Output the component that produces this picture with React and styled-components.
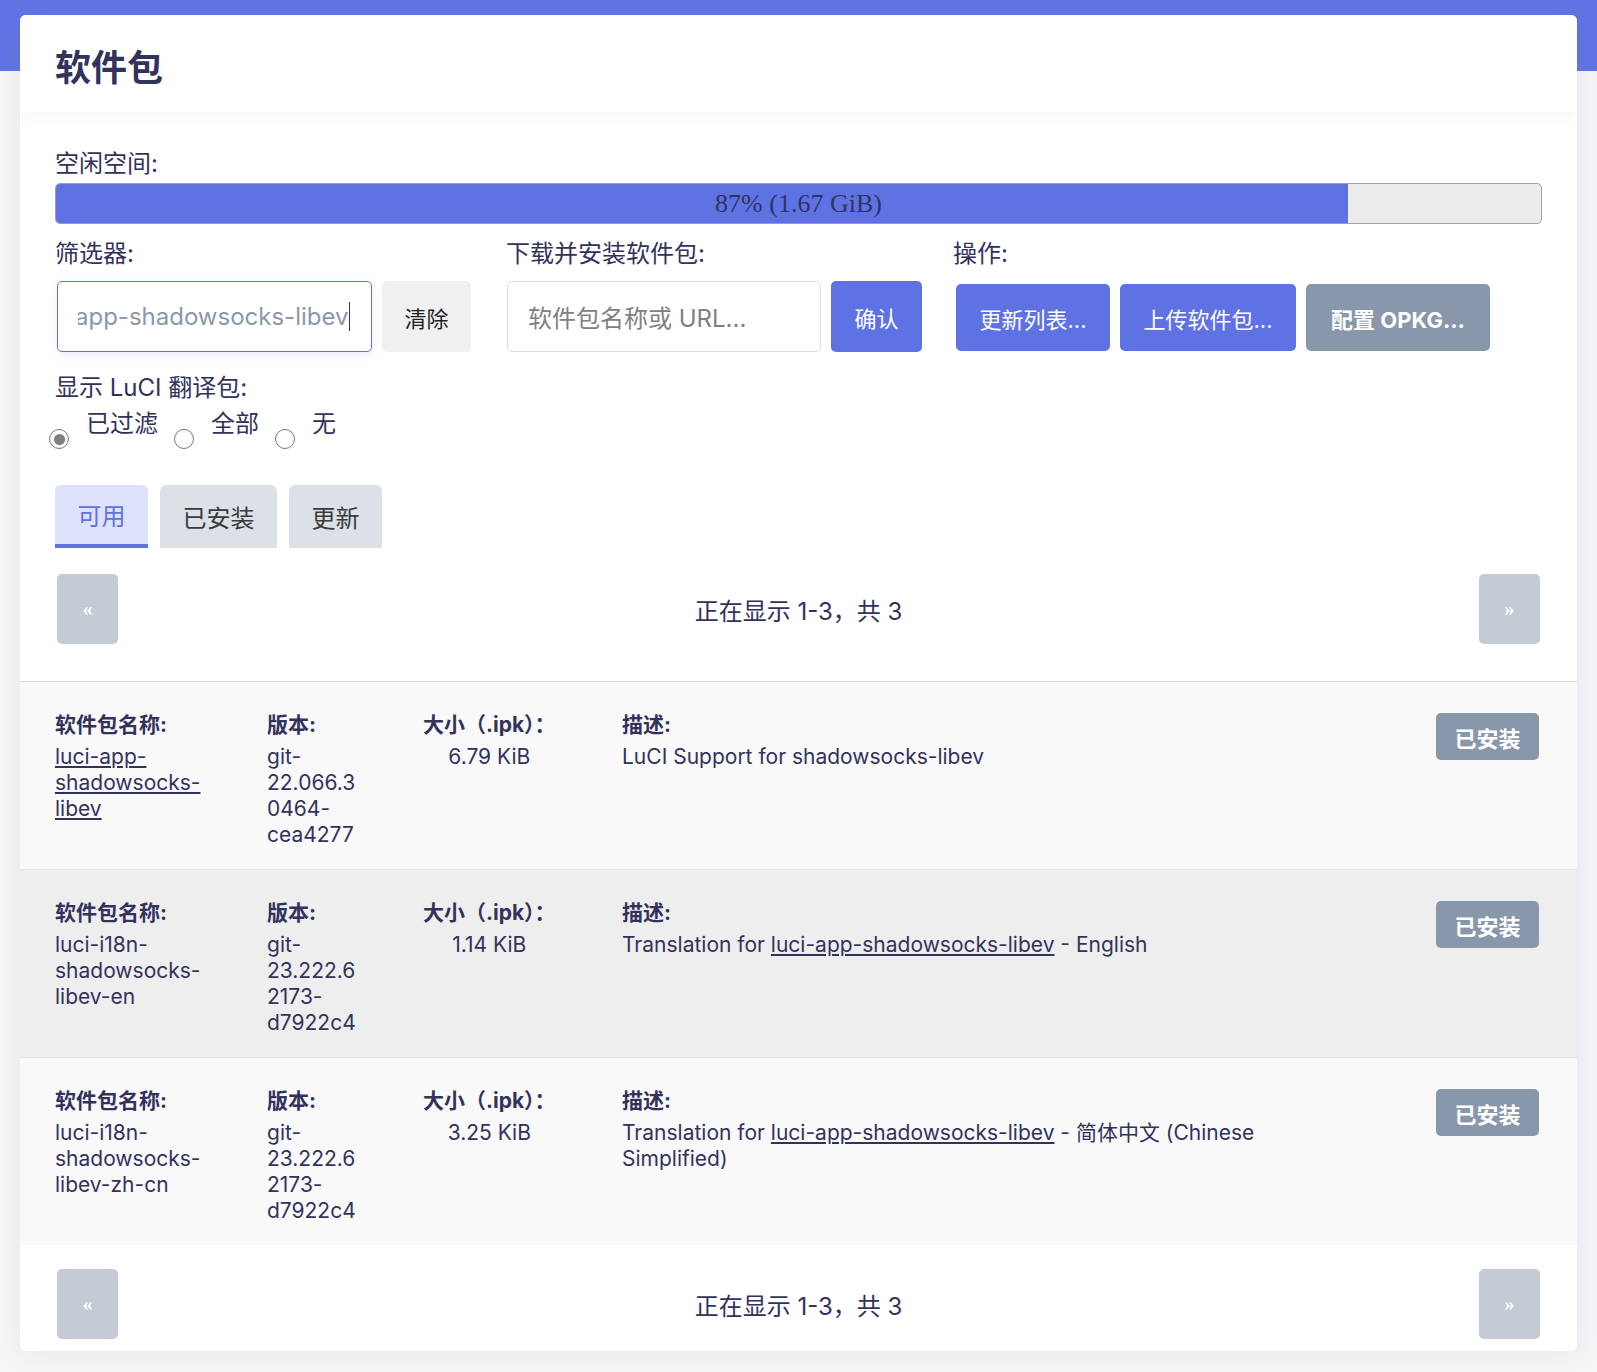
import React from 'react';
import styled, { createGlobalStyle } from 'styled-components';

const GlobalStyle = createGlobalStyle`
  html, body { margin: 0; padding: 0; }
  body {
    background: #f4f5f7;
    font-family: Inter, "Noto Sans CJK SC", sans-serif;
    color: #32325d;
  }
  * { box-sizing: border-box; }
`;

const Page = styled.div`
  min-height: 1372px;
  padding: 15px 20px 21px;
  background: linear-gradient(#5e72e4 0, #5e72e4 71px, #f4f5f7 71px);
`;

const Card = styled.div`
  background: #fff;
  border-radius: 6px;
  box-shadow: 0 0 24px rgba(136, 152, 170, 0.15);
  overflow: hidden;
`;

const Header = styled.div`
  position: relative;
  z-index: 1;
  height: 97px;
  display: flex;
  align-items: center;
  padding: 2px 35px 0;
  background: #fff;
  box-shadow: 0 6px 16px rgba(0, 0, 0, 0.035);
`;

const Title = styled.h2`
  margin: 0;
  font-family: "Noto Sans CJK SC", sans-serif;
  font-size: 36px;
  font-weight: 700;
  line-height: 1;
  color: #32325d;
`;

const Body = styled.div`
  padding: 34px 35px 37px;
`;

const FieldLabel = styled.div`
  font-size: 24px;
  line-height: 36px;
  color: #32325d;
`;

const Progress = styled.div`
  position: relative;
  margin-top: 1px;
  height: 41px;
  border: 1px solid #a0a0a0;
  border-radius: 5px;
  background: #ececec;
  overflow: hidden;
  display: flex;
`;

const ProgressFill = styled.div`
  background: #5e72e4;
  height: 100%;
`;

const ProgressText = styled.div`
  position: absolute;
  inset: 0;
  display: flex;
  align-items: center;
  justify-content: center;
  font-family: "Liberation Serif", serif;
  font-size: 26px;
  color: #32325d;
`;

const ControlsRow = styled.div`
  margin-top: 12px;
  display: grid;
  grid-template-columns: 451px 447px 1fr;
`;

const Group = styled.div`
  display: flex;
  flex-direction: column;
`;

const GroupControls = styled.div`
  margin-top: 9px;
  display: flex;
  align-items: flex-start;
  gap: 10px;
  padding-left: ${(p) => p.$indent || 0}px;
`;

const TextBox = styled.div`
  width: ${(p) => p.$w}px;
  height: 71px;
  padding: 0 21px 0 20px;
  border: 1px solid ${(p) => (p.$focused ? '#5e72e4' : '#dedede')};
  border-radius: 5px;
  background: #fff;
  box-shadow: ${(p) => (p.$focused ? '0 3px 10px rgba(94, 114, 228, 0.12)' : 'none')};
  display: flex;
  align-items: center;
  font-size: 24px;
`;

const TextClip = styled.div`
  flex: 1;
  overflow: hidden;
  display: flex;
  justify-content: flex-end;
  align-items: center;
  white-space: nowrap;
`;

const TypedText = styled.span`
  flex-shrink: 0;
  color: #8a98aa;
`;

const Caret = styled.span`
  flex-shrink: 0;
  width: 1.5px;
  height: 29px;
  background: #32325d;
`;

const Placeholder = styled.span`
  color: #808080;
  white-space: nowrap;
`;

const Button = styled.button`
  width: ${(p) => p.$w}px;
  height: ${(p) => p.$h || 71}px;
  margin-top: ${(p) => p.$mt || 0}px;
  padding: 0;
  border: none;
  border-radius: 5px;
  font-family: Inter, "Noto Sans CJK SC", sans-serif;
  font-size: 22px;
  font-weight: ${(p) => (p.$bold ? 700 : 400)};
  cursor: pointer;
  background: ${(p) =>
    p.$variant === 'primary' ? '#5e72e4' : p.$variant === 'neutral' ? '#8898aa' : '#f0f0f0'};
  color: ${(p) => (p.$variant === 'light' ? '#1f1f1f' : '#fff')};
`;

const RadioRow = styled.div`
  margin-left: -6px;
  display: flex;
  align-items: flex-start;
`;

const RadioItem = styled.label`
  display: flex;
  align-items: flex-start;
  margin-right: 16px;
  font-size: 24px;
  line-height: 36px;
  color: #32325d;
`;

const RadioCircle = styled.span`
  width: 20px;
  height: 20px;
  margin-top: 23px;
  margin-right: 17px;
  border-radius: 50%;
  border: 1.5px solid #777;
  background: #fff;
  display: flex;
  align-items: center;
  justify-content: center;
  &::after {
    content: '';
    width: 11px;
    height: 11px;
    border-radius: 50%;
    background: ${(p) => (p.$checked ? '#7f7f7f' : 'transparent')};
  }
`;

const TabBar = styled.div`
  margin-top: 36px;
  display: flex;
  gap: 12px;
`;

const Tab = styled.div`
  height: 63px;
  padding: 0 22.5px;
  display: flex;
  align-items: center;
  border-radius: 6px 6px 0 0;
  background: ${(p) => (p.$active ? '#dde1fa' : '#dce1e7')};
  border-bottom: 4px solid ${(p) => (p.$active ? '#5e72e4' : 'transparent')};
  padding-top: ${(p) => (p.$active ? 0 : 4)}px;
  color: ${(p) => (p.$active ? '#5e72e4' : '#3a3a3a')};
  font-size: 24px;
`;

const Pager = styled.div`
  margin-top: ${(p) => p.$mt || 0}px;
  display: flex;
  align-items: center;
  justify-content: space-between;
`;

const PagerButton = styled.button`
  width: 61px;
  height: 70px;
  margin: 0 2px;
  border: none;
  border-radius: 5px;
  background: #c4cbd4;
  color: #fff;
  font-family: "Liberation Serif", serif;
  font-size: 20px;
  font-weight: 700;
  padding: 0;
`;

const PagerText = styled.div`
  font-size: 24px;
  color: #32325d;
`;

const Table = styled.div`
  display: flex;
  flex-direction: column;
`;

const Row = styled.div`
  display: flex;
  align-items: flex-start;
  padding: 30px 38px 21px 35px;
  border-top: 1px solid ${(p) => (p.$first ? '#dcdcdc' : '#e4e4e4')};
  background: ${(p) => (p.$alt ? '#eeeeee' : '#f9f9fa')};
  font-size: 21px;
  line-height: 26px;
`;

const Cell = styled.div`
  width: ${(p) => (p.$w ? `${p.$w}px` : 'auto')};
  flex: ${(p) => (p.$w ? '0 0 auto' : '1 1 0')};
  padding-right: ${(p) => p.$pr || 0}px;
  min-width: 0;
`;

const SizeBlock = styled.div`
  display: inline-block;
  text-align: center;
`;

const CellLabel = styled.div`
  font-weight: 700;
  margin-bottom: 6px;
  white-space: nowrap;
`;

const CellValue = styled.div`
  max-width: ${(p) => (p.$max ? `${p.$max}px` : 'none')};
  overflow-wrap: break-word;
`;

const PkgLink = styled.a`
  color: #32325d;
  text-decoration: underline;
  text-underline-offset: 2px;
`;

const InstalledButton = styled.button`
  flex-shrink: 0;
  width: 103px;
  height: 47px;
  margin-top: 1px;
  border: none;
  border-radius: 5px;
  background: #8898aa;
  color: #fff;
  font-family: "Noto Sans CJK SC", sans-serif;
  font-size: 22px;
  font-weight: 700;
  padding: 0;
`;

const Footer = styled.div`
  padding: 24px 35px 12px;
`;

const packages = [
  {
    name: 'luci-app-shadowsocks-libev',
    link: true,
    version: 'git-22.066.30464-cea4277',
    size: '6.79 KiB',
    desc: ['LuCI Support for shadowsocks-libev'],
  },
  {
    name: 'luci-i18n-shadowsocks-libev-en',
    version: 'git-23.222.62173-d7922c4',
    size: '1.14 KiB',
    desc: ['Translation for ', 'luci-app-shadowsocks-libev', ' - English'],
  },
  {
    name: 'luci-i18n-shadowsocks-libev-zh-cn',
    version: 'git-23.222.62173-d7922c4',
    size: '3.25 KiB',
    desc: ['Translation for ', 'luci-app-shadowsocks-libev', ' - 简体中文 (Chinese Simplified)'],
  },
];

function Pagination({ mt }) {
  return (
    <Pager $mt={mt}>
      <PagerButton>«</PagerButton>
      <PagerText>正在显示 1-3，共 3</PagerText>
      <PagerButton>»</PagerButton>
    </Pager>
  );
}

export default function App() {
  return (
    <>
      <GlobalStyle />
      <Page>
        <Card>
          <Header>
            <Title>软件包</Title>
          </Header>
          <Body>
            <FieldLabel>空闲空间:</FieldLabel>
            <Progress>
              <ProgressFill style={{ width: '87%' }} />
              <ProgressText>87% (1.67 GiB)</ProgressText>
            </Progress>

            <ControlsRow>
              <Group>
                <FieldLabel>筛选器:</FieldLabel>
                <GroupControls $indent={2}>
                  <TextBox $w={315} $focused>
                    <TextClip>
                      <TypedText>luci-app-shadowsocks-libev</TypedText>
                      <Caret />
                    </TextClip>
                  </TextBox>
                  <Button $w={89} $variant="light">清除</Button>
                </GroupControls>
              </Group>
              <Group>
                <FieldLabel>下载并安装软件包:</FieldLabel>
                <GroupControls $indent={1}>
                  <TextBox $w={314}>
                    <Placeholder>软件包名称或 URL...</Placeholder>
                  </TextBox>
                  <Button $w={91} $variant="primary">确认</Button>
                </GroupControls>
              </Group>
              <Group>
                <FieldLabel>操作:</FieldLabel>
                <GroupControls $indent={3}>
                  <Button $w={154} $h={67} $mt={3} $variant="primary">更新列表...</Button>
                  <Button $w={176} $h={67} $mt={3} $variant="primary">上传软件包...</Button>
                  <Button $w={184} $h={67} $mt={3} $variant="neutral" $bold>配置 OPKG...</Button>
                </GroupControls>
              </Group>
            </ControlsRow>

            <FieldLabel style={{ marginTop: 18 }}>显示 LuCI 翻译包:</FieldLabel>
            <RadioRow>
              <RadioItem>
                <RadioCircle $checked />
                已过滤
              </RadioItem>
              <RadioItem>
                <RadioCircle />
                全部
              </RadioItem>
              <RadioItem>
                <RadioCircle />
                无
              </RadioItem>
            </RadioRow>

            <TabBar>
              <Tab $active>可用</Tab>
              <Tab>已安装</Tab>
              <Tab>更新</Tab>
            </TabBar>

            <Pagination mt={26} />
          </Body>

          <Table>
            {packages.map((pkg, i) => (
              <Row key={pkg.name} $alt={i === 1} $first={i === 0}>
                <Cell $w={212} $pr={50}>
                  <CellLabel>软件包名称:</CellLabel>
                  <CellValue>
                    {pkg.link ? <PkgLink href="#">{pkg.name}</PkgLink> : pkg.name}
                  </CellValue>
                </Cell>
                <Cell $w={156}>
                  <CellLabel>版本:</CellLabel>
                  <CellValue $max={92}>{pkg.version}</CellValue>
                </Cell>
                <Cell $w={199}>
                  <SizeBlock>
                    <CellLabel>大小（.ipk）：</CellLabel>
                    <CellValue>{pkg.size}</CellValue>
                  </SizeBlock>
                </Cell>
                <Cell>
                  <CellLabel>描述:</CellLabel>
                  <CellValue $max={690}>
                    {pkg.desc.map((part, j) =>
                      j === 1 ? (
                        <PkgLink key={j} href="#">{part}</PkgLink>
                      ) : (
                        <React.Fragment key={j}>{part}</React.Fragment>
                      )
                    )}
                  </CellValue>
                </Cell>
                <InstalledButton>已安装</InstalledButton>
              </Row>
            ))}
          </Table>

          <Footer>
            <Pagination />
          </Footer>
        </Card>
      </Page>
    </>
  );
}
